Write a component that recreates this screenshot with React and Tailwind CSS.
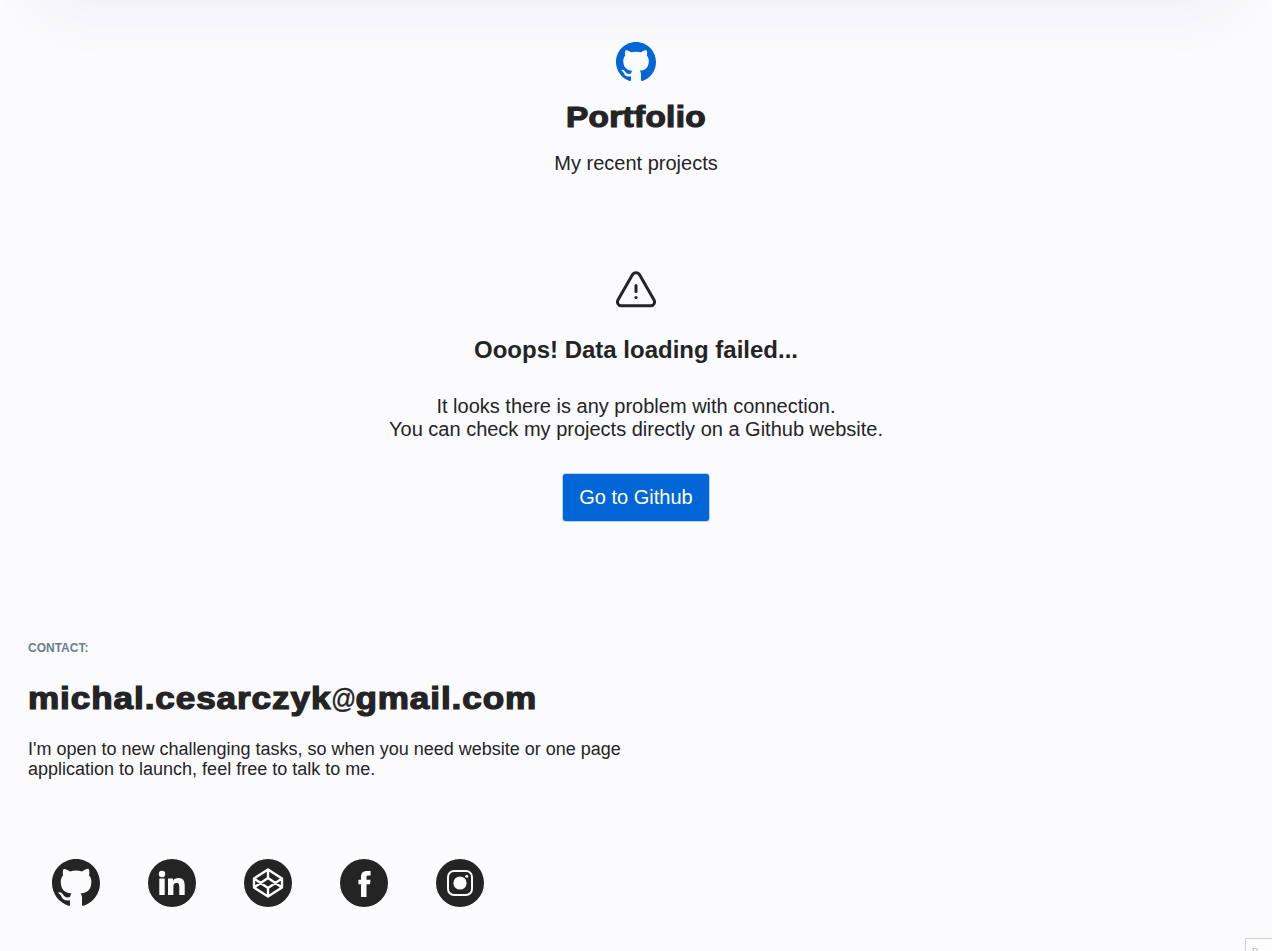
const GITHUB_PATH =
  'M8 0C3.58 0 0 3.58 0 8c0 3.54 2.29 6.53 5.47 7.59.4.07.55-.17.55-.38 0-.19-.01-.82-.01-1.49-2.01.37-2.53-.49-2.69-.94-.09-.23-.48-.94-.82-1.13-.28-.15-.68-.52-.01-.53.63-.01 1.08.58 1.23.82.72 1.21 1.87.87 2.33.66.07-.52.28-.87.51-1.07-1.78-.2-3.64-.89-3.64-3.95 0-.87.31-1.59.82-2.15-.08-.2-.36-1.02.08-2.12 0 0 .67-.21 2.2.82.64-.18 1.32-.27 2-.27s1.36.09 2 .27c1.53-1.04 2.2-.82 2.2-.82.44 1.1.16 1.92.08 2.12.51.56.82 1.27.82 2.15 0 3.07-1.87 3.75-3.65 3.95.29.25.54.73.54 1.48 0 1.07-.01 1.93-.01 2.2 0 .21.15.46.55.38A8.01 8.01 0 0 0 16 8c0-4.42-3.58-8-8-8z';

function GithubIcon({ className }) {
  return (
    <svg viewBox="0 0 16 16" fill="currentColor" className={className}>
      <path d={GITHUB_PATH} />
    </svg>
  );
}

function WarningIcon() {
  return (
    <svg viewBox="0 0 40 40" fill="none" stroke="currentColor" strokeWidth="3" strokeLinecap="round" className="size-10">
      <path d="M16.3 4.900 2.100 29.800c-1.500 2.900 0 6 3.100 6h29.600c3.100 0 4.600-3.100 3.100-6L23.700 4.900c-1.700-3-5.700-3-7.400 0z" />
      <path d="M20 15.600v5.800" />
      <circle cx="20" cy="27.500" r="1.600" fill="currentColor" stroke="none" />
    </svg>
  );
}

function Round({ label, children }) {
  return (
    <a href="#" aria-label={label} className="size-12">
      <svg viewBox="0 0 48 48" className="size-12">
        <circle cx="24" cy="24" r="24" fill="#242424" />
        {children}
      </svg>
    </a>
  );
}

export default function App() {
  return (
    <div className="relative h-[951px] w-full overflow-hidden bg-[#fbfbfe] font-['Liberation_Sans',Arial,sans-serif] text-[#242424]">
      <div className="pointer-events-none absolute inset-x-[45px] -top-[300px] h-[300px] shadow-[0_0_60px_rgba(80,70,120,0.09)]" />

      <section className="relative flex flex-col items-center pt-[42px] text-center">
        <GithubIcon className="size-10 text-[#0366d6]" />
        <h2 className="mt-[18px] origin-center scale-x-[1.13] text-[29.5px] leading-[34px] font-bold tracking-[0.3px] [-webkit-text-stroke:1.2px_#242424]">
          Portfolio
        </h2>
        <p className="mt-[18px] text-[20px] leading-[23px]">My recent projects</p>

        <div className="mt-[95px] flex flex-col items-center">
          <WarningIcon />
          <h3 className="mt-[26px] text-[24px] leading-[27px] font-bold">Ooops! Data loading failed...</h3>
          <p className="mt-[32px] text-[20px] leading-[23px]">
            It looks there is any problem with connection.
            <br />
            You can check my projects directly on a Github website.
          </p>
          <a
            href="#"
            className="mt-[32px] flex h-[49px] w-[148px] items-center justify-center rounded-[3px] border border-[#b9d4f3] bg-[#0366d6] bg-clip-padding pb-px text-[20px] leading-[23px] whitespace-nowrap text-white"
          >
            Go to Github
          </a>
        </div>
      </section>

      <footer className="mt-[119px] flex flex-col items-start pl-7">
        <p className="text-[12px] leading-[14px] font-bold text-[#6a7f8d]">CONTACT:</p>
        <h2 className="mt-[25px] h-9 origin-left scale-x-[1.15] text-[30.5px] leading-[36px] font-bold tracking-[0.8px] whitespace-nowrap [-webkit-text-stroke:1.2px_#242424]">
          michal.cesarczyk
          <span className="relative -top-px -mx-[4px] inline-block scale-x-[0.76] text-[28.5px] leading-[30px] font-normal tracking-normal [-webkit-text-stroke:0.4px_#242424]">
            @
          </span>
          gmail.com
        </h2>
        <p className="mt-[23px] text-[18px] leading-[20px] whitespace-nowrap">
          I'm open to new challenging tasks, so when you need website or one page
          <br />
          application to launch, feel free to talk to me.
        </p>
        <div className="mt-20 ml-6 flex gap-12">
          <a href="#" aria-label="Github" className="size-12">
            <GithubIcon className="size-12" />
          </a>
          <Round label="LinkedIn">
            <g fill="#fbfbfe">
              <circle cx="14" cy="15" r="3.2" />
              <path d="M11.300 19.500h5.400v16.500h-5.400zM20 19.500h5.100v2.200c.8-1.400 2.600-2.600 5.200-2.600 5.200 0 6.400 3.300 6.400 7.700V36h-5.400v-7.800c0-2-.2-4.200-2.800-4.200-2.700 0-3.100 2-3.100 4.100V36H20z" />
            </g>
          </Round>
          <Round label="CodePen">
            <path
              d="M24 10.500 38 19.500v9L24 37.500 10 28.500v-9zM24 10.500v8.500M24 29v8.500M10 19.500l14 9.500 14-9.500M10 28.500l14-9.500 14 9.500"
              fill="none"
              stroke="#fbfbfe"
              strokeWidth="2.4"
              strokeLinejoin="round"
            />
          </Round>
          <Round label="Facebook">
            <path
              d="M21 38V25.200h-2.600v-4.500H21v-2.600c0-3.800 1.700-6 6-6h3.600v4.500h-2.300c-1.700 0-1.800.7-1.800 1.800v2.300h4l-.5 4.500h-3.500V38z"
              fill="#fbfbfe"
            />
          </Round>
          <Round label="Instagram">
            <rect x="12" y="12" width="24" height="24" rx="6" fill="none" stroke="#fbfbfe" strokeWidth="2" />
            <circle cx="24" cy="24" r="6.600" fill="#fbfbfe" />
            <circle cx="30.700" cy="17.300" r="1.500" fill="#fbfbfe" />
          </Round>
        </div>
      </footer>

      <div className="absolute top-[938px] left-[1245px] h-10 w-10 border border-[#cfcfcf] bg-[#fdfdfe] pt-[8px] pl-[6px] text-[9px] leading-[9px] text-[#b5b5b5]">
        P
      </div>
    </div>
  );
}
